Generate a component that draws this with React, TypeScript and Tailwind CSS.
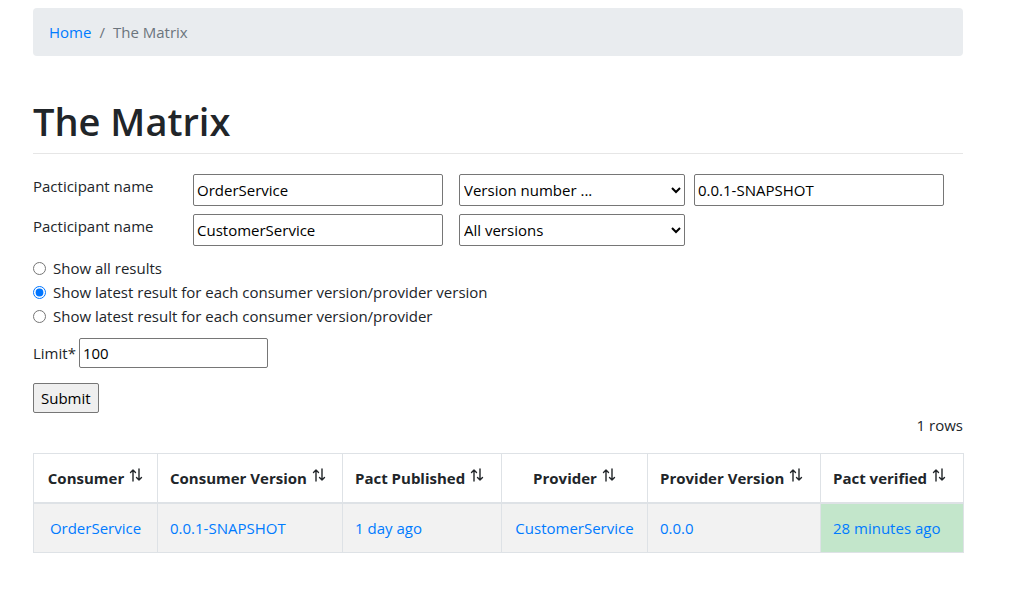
const inputCls =
    "h-8 border border-[#767676] rounded-[2px] bg-white px-[3px] text-[15px] text-black outline-none";
const selectCls =
    "h-8 border border-[#767676] rounded-[2px] bg-white pl-0 pr-1 text-[15px] text-black outline-none";

function SortIcon() {
    return (
        <svg width="14" height="14" viewBox="0 0 14 14" className="inline-block ml-[5px] -mt-[10px] align-middle">
            <g fill="none" stroke="#212529" strokeWidth="1.4" strokeLinecap="round" strokeLinejoin="round">
                <path d="M4 13V2M1.5 4.5L4 2l2.5 2.5" />
                <path d="M10 1v11M7.5 9.5L10 12l2.5-2.5" />
            </g>
        </svg>
    );
}

const columns = [
    { label: "Consumer", width: "w-[124px]", center: true },
    { label: "Consumer Version", width: "w-[185px]", center: false },
    { label: "Pact Published", width: "w-[159px]", center: false },
    { label: "Provider", width: "w-[146px]", center: true },
    { label: "Provider Version", width: "w-[173px]", center: false },
    { label: "Pact verified", width: "w-[143px]", center: false },
];

const row = ["OrderService", "0.0.1-SNAPSHOT", "1 day ago", "CustomerService", "0.0.0", "28 minutes ago"];

export default function App() {
    return (
        <div
            className="min-h-screen bg-white text-[15px] leading-6 text-[#212529]"
            style={{ fontFamily: '"Open Sans", sans-serif' }}
        >
            <div className="ml-[33px] w-[930px] pt-2">
                {/* breadcrumb */}
                <nav className="flex h-[48px] items-center rounded bg-[#e9ecef] px-4">
                    <a className="text-[#007bff]">Home</a>
                    <span className="px-2 text-[#6c757d]">/</span>
                    <span className="text-[#6c757d]">The Matrix</span>
                </nav>

                <h1 className="mt-[42px] text-[38px] font-semibold leading-[47px]">The Matrix</h1>
                <div className="mt-[8px] border-t border-[#e6e6e6]" />

                <form className="mt-[20px]">
                    <div className="flex flex-col gap-2">
                        <div className="flex items-start">
                            <label className="w-[160px]">Pacticipant name</label>
                            <input className={`${inputCls} w-[250px]`} defaultValue="OrderService" />
                            <select className={`${selectCls} ml-4 w-[226px]`} defaultValue="version">
                                <option value="version">Version number ...</option>
                                <option value="all">All versions</option>
                            </select>
                            <input className={`${inputCls} ml-[9px] w-[250px]`} defaultValue="0.0.1-SNAPSHOT" />
                        </div>
                        <div className="flex items-start">
                            <label className="w-[160px]">Pacticipant name</label>
                            <input className={`${inputCls} w-[250px]`} defaultValue="CustomerService" />
                            <select className={`${selectCls} ml-4 w-[226px]`} defaultValue="all">
                                <option value="version">Version number ...</option>
                                <option value="all">All versions</option>
                            </select>
                        </div>
                    </div>

                    <div className="mt-[10px] flex flex-col">
                        {[
                            "Show all results",
                            "Show latest result for each consumer version/provider version",
                            "Show latest result for each consumer version/provider",
                        ].map((t, i) => (
                            <label key={t} className="flex h-6 items-center gap-[7px]">
                                <input type="radio" name="latest" defaultChecked={i === 1} className="m-0 h-[13px] w-[13px]" />
                                <span>{t}</span>
                            </label>
                        ))}
                    </div>

                    <div className="mt-[10px] flex items-center gap-[3px]">
                        <label>Limit*</label>
                        <input className={`${inputCls} h-[30px] w-[189px]`} defaultValue="100" />
                    </div>

                    <button
                        type="button"
                        className="mt-[15px] h-[30px] rounded-[2px] border border-[#767676] bg-[#efefef] px-[7px] text-[15px] text-black"
                    >
                        Submit
                    </button>
                </form>

                <div className="text-right">1 rows</div>

                <table className="mt-4 w-[929px] table-fixed border-collapse">
                    <thead>
                        <tr>
                            {columns.map(c => (
                                <th
                                    key={c.label}
                                    className={`${c.width} border border-b-2 border-[#dee2e6] px-3 py-3 font-bold ${c.center ? "text-center" : "text-left"}`}
                                >
                                    {c.label}
                                    <SortIcon />
                                </th>
                            ))}
                        </tr>
                    </thead>
                    <tbody>
                        <tr className="bg-[#f2f2f2]">
                            {row.map((v, i) => (
                                <td
                                    key={i}
                                    className={`border border-[#dee2e6] px-3 py-3 text-[#007bff] ${columns[i].center ? "text-center" : "text-left"} ${i === 5 ? "bg-[#c3e6cb]" : ""}`}
                                >
                                    <a>{v}</a>
                                </td>
                            ))}
                        </tr>
                    </tbody>
                </table>
            </div>
        </div>
    );
}
